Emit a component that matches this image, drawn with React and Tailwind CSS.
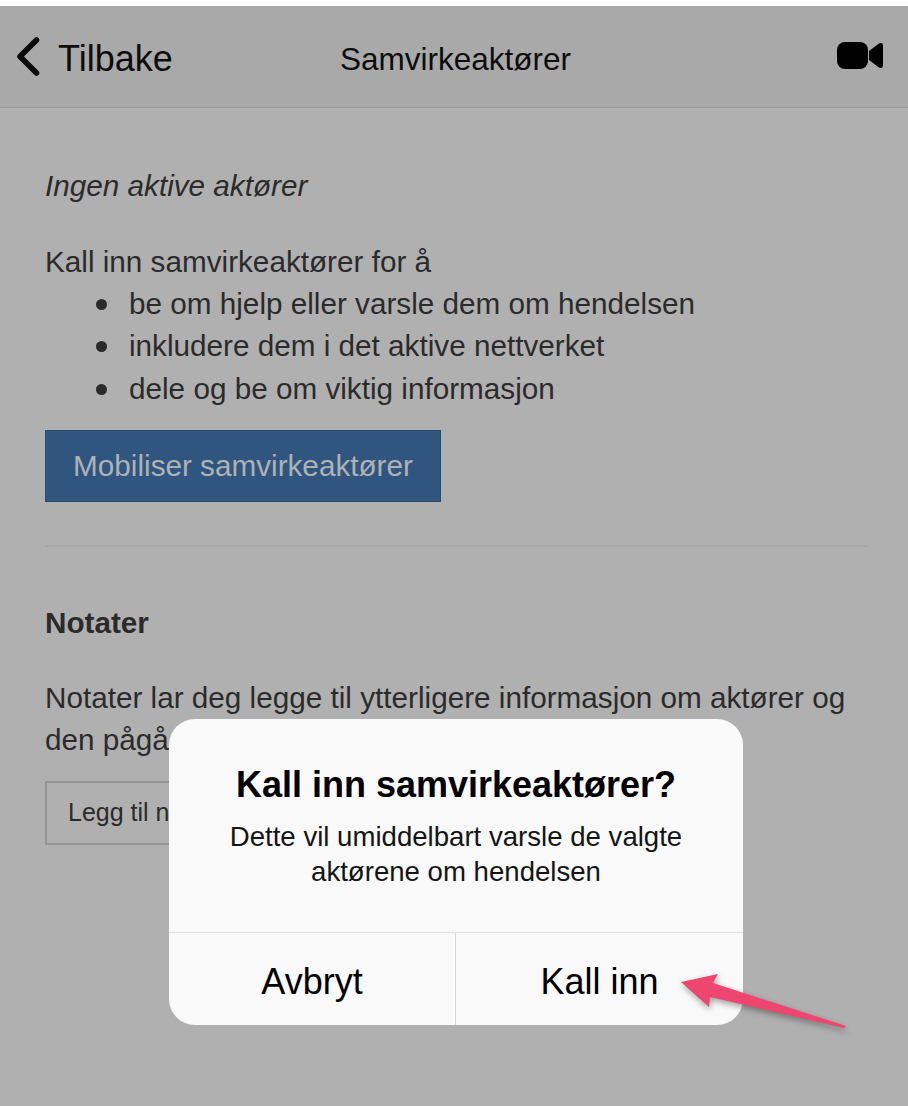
import React from "react";

const points = [
  "be om hjelp eller varsle dem om hendelsen",
  "inkludere dem i det aktive nettverket",
  "dele og be om viktig informasjon",
];

export default function App() {
  return (
    <div className="relative w-[908px] h-[1106px] overflow-hidden bg-white font-['Liberation_Sans',Arial,sans-serif]">
      <div className="mt-[6px] h-[1100px] bg-[#b0b0b0] flex flex-col">
        {/* Header */}
        <div className="h-[102px] shrink-0 bg-[#a9a9a9] border-b border-[#999999] flex items-center justify-between pl-[14px] pr-[25px] pt-[4px] text-[#0d0d0d]">
          <div className="flex items-center w-[200px]">
            <svg width="28" height="44" viewBox="0 0 28 44" fill="none" className="-mt-[3px]">
              <path d="M22.5 5 L6 21.5 L22.5 38" stroke="#0a0a0a" strokeWidth="5.5" strokeLinecap="round" strokeLinejoin="round" />
            </svg>
            <span className="ml-[16px] text-[36px] leading-none">Tilbake</span>
          </div>
          <span className="text-[31.5px] leading-none ml-[14px] mt-[2px]">Samvirkeaktører</span>
          <div className="w-[200px] flex justify-end -mt-[6px]">
            <svg width="46" height="28" viewBox="0 0 46 28">
              <rect x="0" y="0" width="31" height="27" rx="8" fill="#000000" />
              <path d="M32 9 L42 1.5 Q46 0 46 4 L46 23 Q46 27 42 25.5 L32 18 Z" fill="#000000" />
            </svg>
          </div>
        </div>

        {/* Body */}
        <div className="pl-[45px] pr-[40px] text-[29.7px] text-[#2b2b2b]">
          <p className="mt-[60px] leading-[36px] italic">Ingen aktive aktører</p>
          <p className="mt-[37px] leading-[42px]">Kall inn samvirkeaktører for å</p>
          <ul className="pl-[51px] leading-[42.4px]">
            {points.map((p) => (
              <li key={p} className="flex items-center gap-[22px]">
                <span className="w-[11px] h-[11px] rounded-full bg-[#2b2b2b]" />
                {p}
              </li>
            ))}
          </ul>
          <button className="mt-[20px] block w-[396px] h-[72px] bg-[#30557f] border border-[#2a4a70] text-[#adb2b6] text-[29.7px]">
            Mobiliser samvirkeaktører
          </button>
          <div className="mt-[43px] h-[2px] bg-[#a8a8a8]" />
          <h2 className="mt-[58px] font-bold leading-[36px]">Notater</h2>
          <p className="mt-[36px] leading-[42px]">
            Notater lar deg legge til ytterligere informasjon om aktører og den pågående hendelsen
          </p>
          <button className="mt-[20px] block w-[300px] h-[64px] border-2 border-[#949494] text-left pl-[21px] text-[25px]">
            Legg til notat
          </button>
        </div>
      </div>

      {/* Alert dialog */}
      <div className="absolute left-[169px] top-[719px] w-[574px] h-[306px] rounded-[26px] bg-[#f9f9f9] flex flex-col text-black">
        <div className="h-[214px] border-b border-[#e2e2e2] flex flex-col items-center">
          <h3 className="mt-[45px] text-[36px] leading-[42px] font-bold">Kall inn samvirkeaktører?</h3>
          <p className="mt-[13px] w-[520px] text-center text-[27.6px] leading-[35px] text-[#151515]">
            Dette vil umiddelbart varsle de valgte aktørene om hendelsen
          </p>
        </div>
        <div className="flex-1 flex text-[36px] pt-[6px]">
          <div className="w-[287px] -mt-[6px] pt-[6px] border-r border-[#d8d8d8] flex items-center justify-center">Avbryt</div>
          <div className="flex-1 flex items-center justify-center">Kall inn</div>
        </div>
      </div>

      {/* Annotation arrow */}
      <svg className="absolute left-0 top-0 drop-shadow-[1px_3px_3px_rgba(0,0,0,0.35)]" width="908" height="1106" viewBox="0 0 908 1106">
        <polygon points="681,982 718,974 713,983 846,1026 844,1028 710,997 709,1007" fill="#ee4670" />
      </svg>
    </div>
  );
}
